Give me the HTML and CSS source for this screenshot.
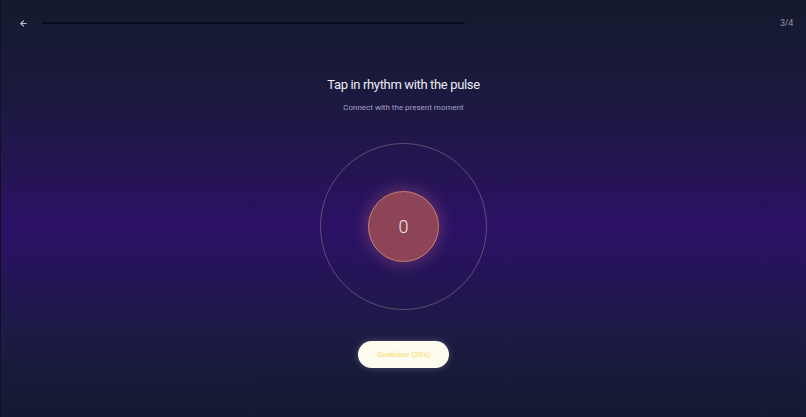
FILE: index.html
```html
<!DOCTYPE html>
<html>
<head>
<meta charset="utf-8">
<link rel="stylesheet" href="styles.css">
</head>
<body>
<div class="screen">
  <header class="topbar">
    <button class="back" aria-label="Back">
      <svg width="9" height="9" viewBox="0 0 24 24" fill="none" stroke="#b8bccc" stroke-width="3" stroke-linecap="round" stroke-linejoin="round"><path d="M19 12H5"/><path d="M12 19l-7-7 7-7"/></svg>
    </button>
    <div class="track"><div class="fill" style="width:60%"></div></div>
    <span class="step">3/4</span>
  </header>
  <main class="content">
    <h1 class="title">Tap in rhythm with the pulse</h1>
    <p class="subtitle">Connect with the present moment</p>
    <div class="ring">
      <div class="pulse">0</div>
    </div>
    <button class="continue">Continue (20s)</button>
  </main>
</div>
</body>
</html>
```
FILE: styles.css
```css
* { box-sizing: border-box; }
html, body { margin: 0; padding: 0; }
body {
  width: 806px;
  height: 417px;
  overflow: hidden;
  font-family: Roboto, "Liberation Sans", sans-serif;
  background: #141a2e;
}
.screen {
  width: 806px;
  height: 417px;
  display: flex;
  flex-direction: column;
  border-left: 1px solid #0f1224;
  background: linear-gradient(180deg,
    #141a2e 0%,
    #1a1a3c 20%,
    #241552 40%,
    #2b1166 54%,
    #26145a 64%,
    #1e1a48 78%,
    #181b39 90%,
    #151a33 100%);
}
.topbar {
  display: flex;
  align-items: center;
  height: 45px;
  padding: 1px 13px 0 17px;
  gap: 14px;
}
.back {
  background: none;
  border: 0;
  padding: 0;
  width: 10px;
  height: 10px;
  display: flex;
  align-items: center;
  justify-content: center;
  cursor: pointer;
}
.track {
  flex: 1;
  height: 2px;
  background: #161a30;
  border-radius: 1px;
  margin-right: 19px;
}
.fill {
  height: 100%;
  background: #090a1c;
  border-radius: 1px;
}
.step {
  font-size: 9px;
  color: #8e93ad;
  letter-spacing: -0.3px;
}
.content {
  display: flex;
  flex-direction: column;
  align-items: center;
}
.title {
  margin: 31px 0 0;
  font-size: 13px;
  font-weight: 400;
  color: #eceaf4;
  letter-spacing: -0.35px;
  line-height: 18px;
}
.subtitle {
  margin: 8px 0 0;
  font-size: 8px;
  color: #a3a0c4;
  line-height: 11px;
}
.ring {
  margin-top: 30px;
  width: 167px;
  height: 167px;
  border-radius: 50%;
  border: 1px solid rgba(185, 150, 155, 0.42);
  display: flex;
  align-items: center;
  justify-content: center;
}
.pulse {
  width: 71px;
  height: 71px;
  border-radius: 50%;
  background: #8c4456;
  border: 1px solid #c98070;
  box-shadow: 0 0 14px 4px rgba(200, 110, 140, 0.28);
  color: #f7e6e6;
  font-size: 18px;
  font-weight: 300;
  display: flex;
  align-items: center;
  justify-content: center;
}
.continue {
  margin-top: 31px;
  width: 91px;
  height: 27px;
  border-radius: 14px;
  border: 0;
  background: #fffcf0;
  color: #f6e38e;
  font-family: Roboto, "Liberation Sans", sans-serif;
  font-size: 8px;
  font-weight: 700;
  padding: 0;
  box-shadow: 0 0 6px rgba(255, 250, 220, 0.25);
}
```
